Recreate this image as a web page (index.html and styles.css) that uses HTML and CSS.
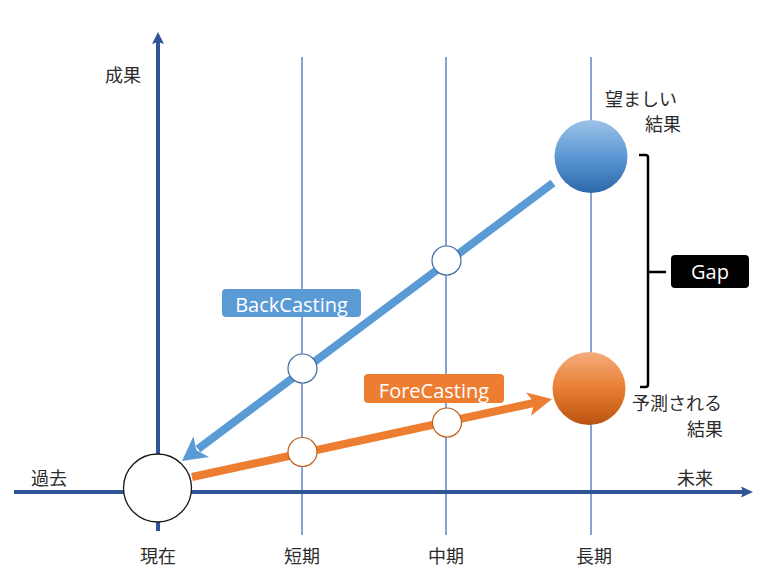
FILE: index.html
```html
<!DOCTYPE html>
<html lang="ja">
<head>
<meta charset="utf-8">
<title>BackCasting / ForeCasting</title>
<link rel="stylesheet" href="styles.css">
</head>
<body>
<svg class="diagram" width="772" height="578" viewBox="0 0 772 578" xmlns="http://www.w3.org/2000/svg">
  <defs>
    <linearGradient id="gBlue" x1="0" y1="0" x2="0" y2="1">
      <stop offset="0" stop-color="#9cc2e8"/>
      <stop offset="0.5" stop-color="#5b98d4"/>
      <stop offset="1" stop-color="#2c68a8"/>
    </linearGradient>
    <linearGradient id="gOrange" x1="0" y1="0" x2="0" y2="1">
      <stop offset="0" stop-color="#f4ad7c"/>
      <stop offset="0.5" stop-color="#e97e33"/>
      <stop offset="1" stop-color="#b9530f"/>
    </linearGradient>
  </defs>

  <!-- thin period lines -->
  <line class="period" x1="302" y1="57" x2="302" y2="535"/>
  <line class="period" x1="446" y1="57" x2="446" y2="535"/>
  <line class="period" x1="591" y1="57" x2="591" y2="535"/>

  <!-- axes -->
  <line class="axis" x1="158" y1="40" x2="158" y2="531"/>
  <polygon class="axis-head" points="158,32 164,44 158,42 152,44"/>
  <line class="axis" x1="14" y1="492" x2="744" y2="492"/>
  <polygon class="axis-head" points="753,492 741,486.5 743,492 741,497.5"/>

  <!-- backcasting line -->
  <line class="back" x1="553" y1="183" x2="198" y2="449"/>
  <polygon class="back-head" points="182,461 193.4,436.2 196.4,450.2 209,457"/>

  <!-- forecasting line -->
  <line class="fore" x1="192" y1="477" x2="536" y2="402.5"/>
  <polygon class="fore-head" points="552,399 526,392.4 534.4,402.8 531.1,415.8"/>

  <!-- present circle -->
  <circle class="present" cx="157.5" cy="488" r="34"/>

  <!-- small nodes -->
  <circle class="node-b" cx="302.5" cy="368.5" r="14.5"/>
  <circle class="node-b" cx="446.5" cy="260.5" r="14.5"/>
  <circle class="node-o" cx="302.5" cy="452" r="14.5"/>
  <circle class="node-o" cx="447" cy="422.5" r="14.5"/>

  <!-- result spheres -->
  <circle cx="591" cy="156.5" r="36.5" fill="url(#gBlue)"/>
  <circle cx="589" cy="388.5" r="36.5" fill="url(#gOrange)"/>

  <!-- bracket -->
  <path class="bracket" d="M639,155 H645.5 Q648,155 648,157.5 V384.5 Q648,387 645.5,387 H640 M648,272 H666"/>

  <!-- labels -->
  <rect class="tag-back" x="222" y="289" width="139" height="28" rx="4"/>
  <text class="tag-text" x="291.5" y="312" text-anchor="middle">BackCasting</text>
  <rect class="tag-fore" x="364" y="374" width="140" height="29" rx="4"/>
  <text class="tag-text" x="434" y="397.5" text-anchor="middle">ForeCasting</text>
  <rect class="tag-gap" x="671" y="255" width="78" height="33" rx="4"/>
  <text class="tag-text" x="710" y="278.5" text-anchor="middle">Gap</text>

  <!-- text -->
  <text class="jp" x="105" y="82">成果</text>
  <text class="jp" x="31" y="485">過去</text>
  <text class="jp" x="677" y="485">未来</text>
  <text class="jp" x="158" y="563" text-anchor="middle">現在</text>
  <text class="jp" x="302" y="563" text-anchor="middle">短期</text>
  <text class="jp" x="446" y="563" text-anchor="middle">中期</text>
  <text class="jp" x="594" y="563" text-anchor="middle">長期</text>
  <text class="jp" x="605" y="106">望ましい</text>
  <text class="jp" x="645" y="131">結果</text>
  <text class="jp" x="632" y="410">予測される</text>
  <text class="jp" x="687" y="436">結果</text>
</svg>
</body>
</html>
```

FILE: styles.css
```css
html, body {
  margin: 0;
  padding: 0;
  background: #ffffff;
}

.diagram {
  display: block;
}

.period {
  stroke: #4a72b8;
  stroke-width: 1.3;
}

.axis {
  stroke: #2f5597;
  stroke-width: 4;
}

.axis-head {
  fill: #2f5597;
}

.back {
  stroke: #5b9bd5;
  stroke-width: 8;
}

.back-head {
  fill: #5b9bd5;
}

.fore {
  stroke: #ed7d31;
  stroke-width: 8;
}

.fore-head {
  fill: #ed7d31;
}

.present {
  fill: #ffffff;
  stroke: #1a1a1a;
  stroke-width: 1.3;
}

.node-b {
  fill: #ffffff;
  stroke: #3d6aa3;
  stroke-width: 1.2;
}

.node-o {
  fill: #ffffff;
  stroke: #c0601e;
  stroke-width: 1.2;
}

.bracket {
  fill: none;
  stroke: #000000;
  stroke-width: 2.5;
}

.tag-back {
  fill: #5b9bd5;
}

.tag-fore {
  fill: #ed7d31;
}

.tag-gap {
  fill: #000000;
}

.tag-text {
  fill: #ffffff;
  font-family: "Open Sans", "Noto Sans", sans-serif;
  font-size: 20px;
}

.jp {
  fill: #2b2b2b;
  font-family: "Noto Sans CJK JP", "Noto Sans", sans-serif;
  font-size: 18px;
}
```
